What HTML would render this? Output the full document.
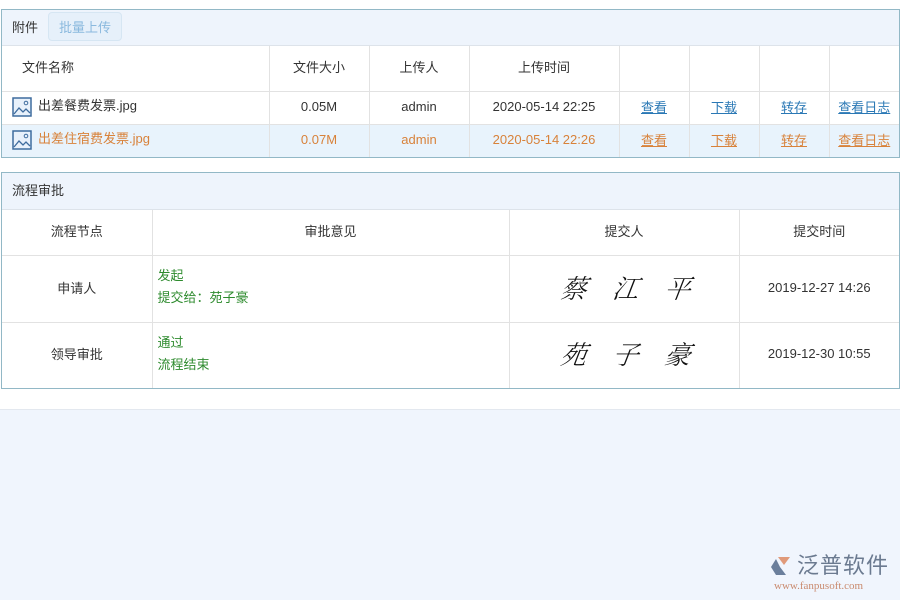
<!DOCTYPE html>
<html><head><meta charset="utf-8"><style>
*{margin:0;padding:0;box-sizing:border-box}
body{width:900px;height:600px;background:#fff;font-family:"Liberation Sans","Noto Sans CJK SC",sans-serif;font-size:13px;color:#333;position:relative;overflow:hidden}
.panel{position:absolute;left:1px;width:899px;border:1px solid #92b8c6;background:#fff}
.hd{background:#eef4fc;border-bottom:1px solid #dde3ea;display:flex;align-items:center;padding-left:10px;padding-bottom:3px}
table{border-collapse:collapse;width:100%;table-layout:fixed}
td{border-right:1px solid #e2e2e2;border-bottom:1px solid #e2e2e2;text-align:center;vertical-align:middle;padding:0 0 3px 0}
td:last-child{border-right:none}
tr:last-child td{border-bottom:none}
a{text-decoration:underline}
.b a{color:#2a78b5}.o,.o a{color:#d8823a}
.o td{background:#e8f3fc}
.ic{display:inline-block;width:20px;height:20px;vertical-align:middle;margin-right:6px}
.g{color:#2e8b2e;text-align:left;padding-left:5px;line-height:22px}
.sig{font-family:"Noto Serif CJK SC",serif;font-size:26px;font-style:italic;letter-spacing:26px;color:#111;font-weight:300;display:inline-block;transform:skewX(-8deg);padding-left:30px}
</style></head><body>
<div class="panel" style="top:9px">
 <div class="hd" style="height:36px">附件<span style="margin-left:10px;padding:4px 10px;border:1px solid #d6e6f3;border-radius:4px;background:#e6f0fa;color:#8ab9de">批量上传</span></div>
 <table>
  <colgroup><col style="width:267px"><col style="width:100px"><col style="width:100px"><col style="width:150px"><col style="width:70px"><col style="width:70px"><col style="width:70px"><col></colgroup>
  <tr style="height:45px"><td style="text-align:left;padding-left:20px">文件名称</td><td>文件大小</td><td>上传人</td><td>上传时间</td><td></td><td></td><td></td><td></td></tr>
  <tr class="b" style="height:33px"><td style="text-align:left;padding-left:10px"><svg class="ic" viewBox="0 0 20 20"><rect x="1" y="1" width="18" height="18" fill="#e8f1fb" stroke="#3e6c9e" stroke-width="1.5"/><path d="M2 17 L7 11 L11 15 L14 12 L18 16" fill="none" stroke="#3e6c9e" stroke-width="1.3"/><circle cx="14" cy="6" r="1.8" fill="none" stroke="#3e6c9e"/></svg>出差餐费发票.jpg</td><td>0.05M</td><td>admin</td><td>2020-05-14 22:25</td><td><a>查看</a></td><td><a>下载</a></td><td><a>转存</a></td><td><a>查看日志</a></td></tr>
  <tr class="o" style="height:33px"><td style="text-align:left;padding-left:10px"><svg class="ic" viewBox="0 0 20 20"><rect x="1" y="1" width="18" height="18" fill="#e8f1fb" stroke="#3e6c9e" stroke-width="1.5"/><path d="M2 17 L7 11 L11 15 L14 12 L18 16" fill="none" stroke="#3e6c9e" stroke-width="1.3"/><circle cx="14" cy="6" r="1.8" fill="none" stroke="#3e6c9e"/></svg>出差住宿费发票.jpg</td><td>0.07M</td><td>admin</td><td>2020-05-14 22:26</td><td><a>查看</a></td><td><a>下载</a></td><td><a>转存</a></td><td><a>查看日志</a></td></tr>
 </table>
</div>
<div class="panel" style="top:172px">
 <div class="hd" style="height:37px">流程审批</div>
 <table>
  <colgroup><col style="width:150px"><col style="width:357px"><col style="width:230px"><col></colgroup>
  <tr style="height:45px"><td>流程节点</td><td>审批意见</td><td>提交人</td><td>提交时间</td></tr>
  <tr style="height:67px"><td>申请人</td><td class="g">发起<br>提交给：苑子豪</td><td><span class="sig">蔡江平</span></td><td>2019-12-27 14:26</td></tr>
  <tr style="height:66px"><td>领导审批</td><td class="g">通过<br>流程结束</td><td><span class="sig">苑子豪</span></td><td>2019-12-30 10:55</td></tr>
 </table>
</div>
<div style="position:absolute;left:0;top:409px;width:900px;height:191px;background:#f0f5fd;border-top:1px solid #e3e8ef"></div>
<div style="position:absolute;left:770px;top:553px;width:130px">
 <svg width="24" height="24" viewBox="0 0 24 24" style="position:absolute;left:0;top:2px"><path d="M8 2 L20 2 L14 10 Z" fill="#e09a7a"/><path d="M6 4 L1 12 L6 20 L16 20 L10 12 Z" fill="#6b7f9c"/></svg>
 <div style="position:absolute;left:27px;top:0;font-size:22px;color:#6b7a90;letter-spacing:1px;line-height:26px">泛普软件</div>
 <div style="position:absolute;left:4px;top:27px;font-family:'Liberation Serif',serif;font-size:11px;color:#c98a6e;white-space:nowrap">www.fanpusoft.com</div>
</div>
</body></html>
